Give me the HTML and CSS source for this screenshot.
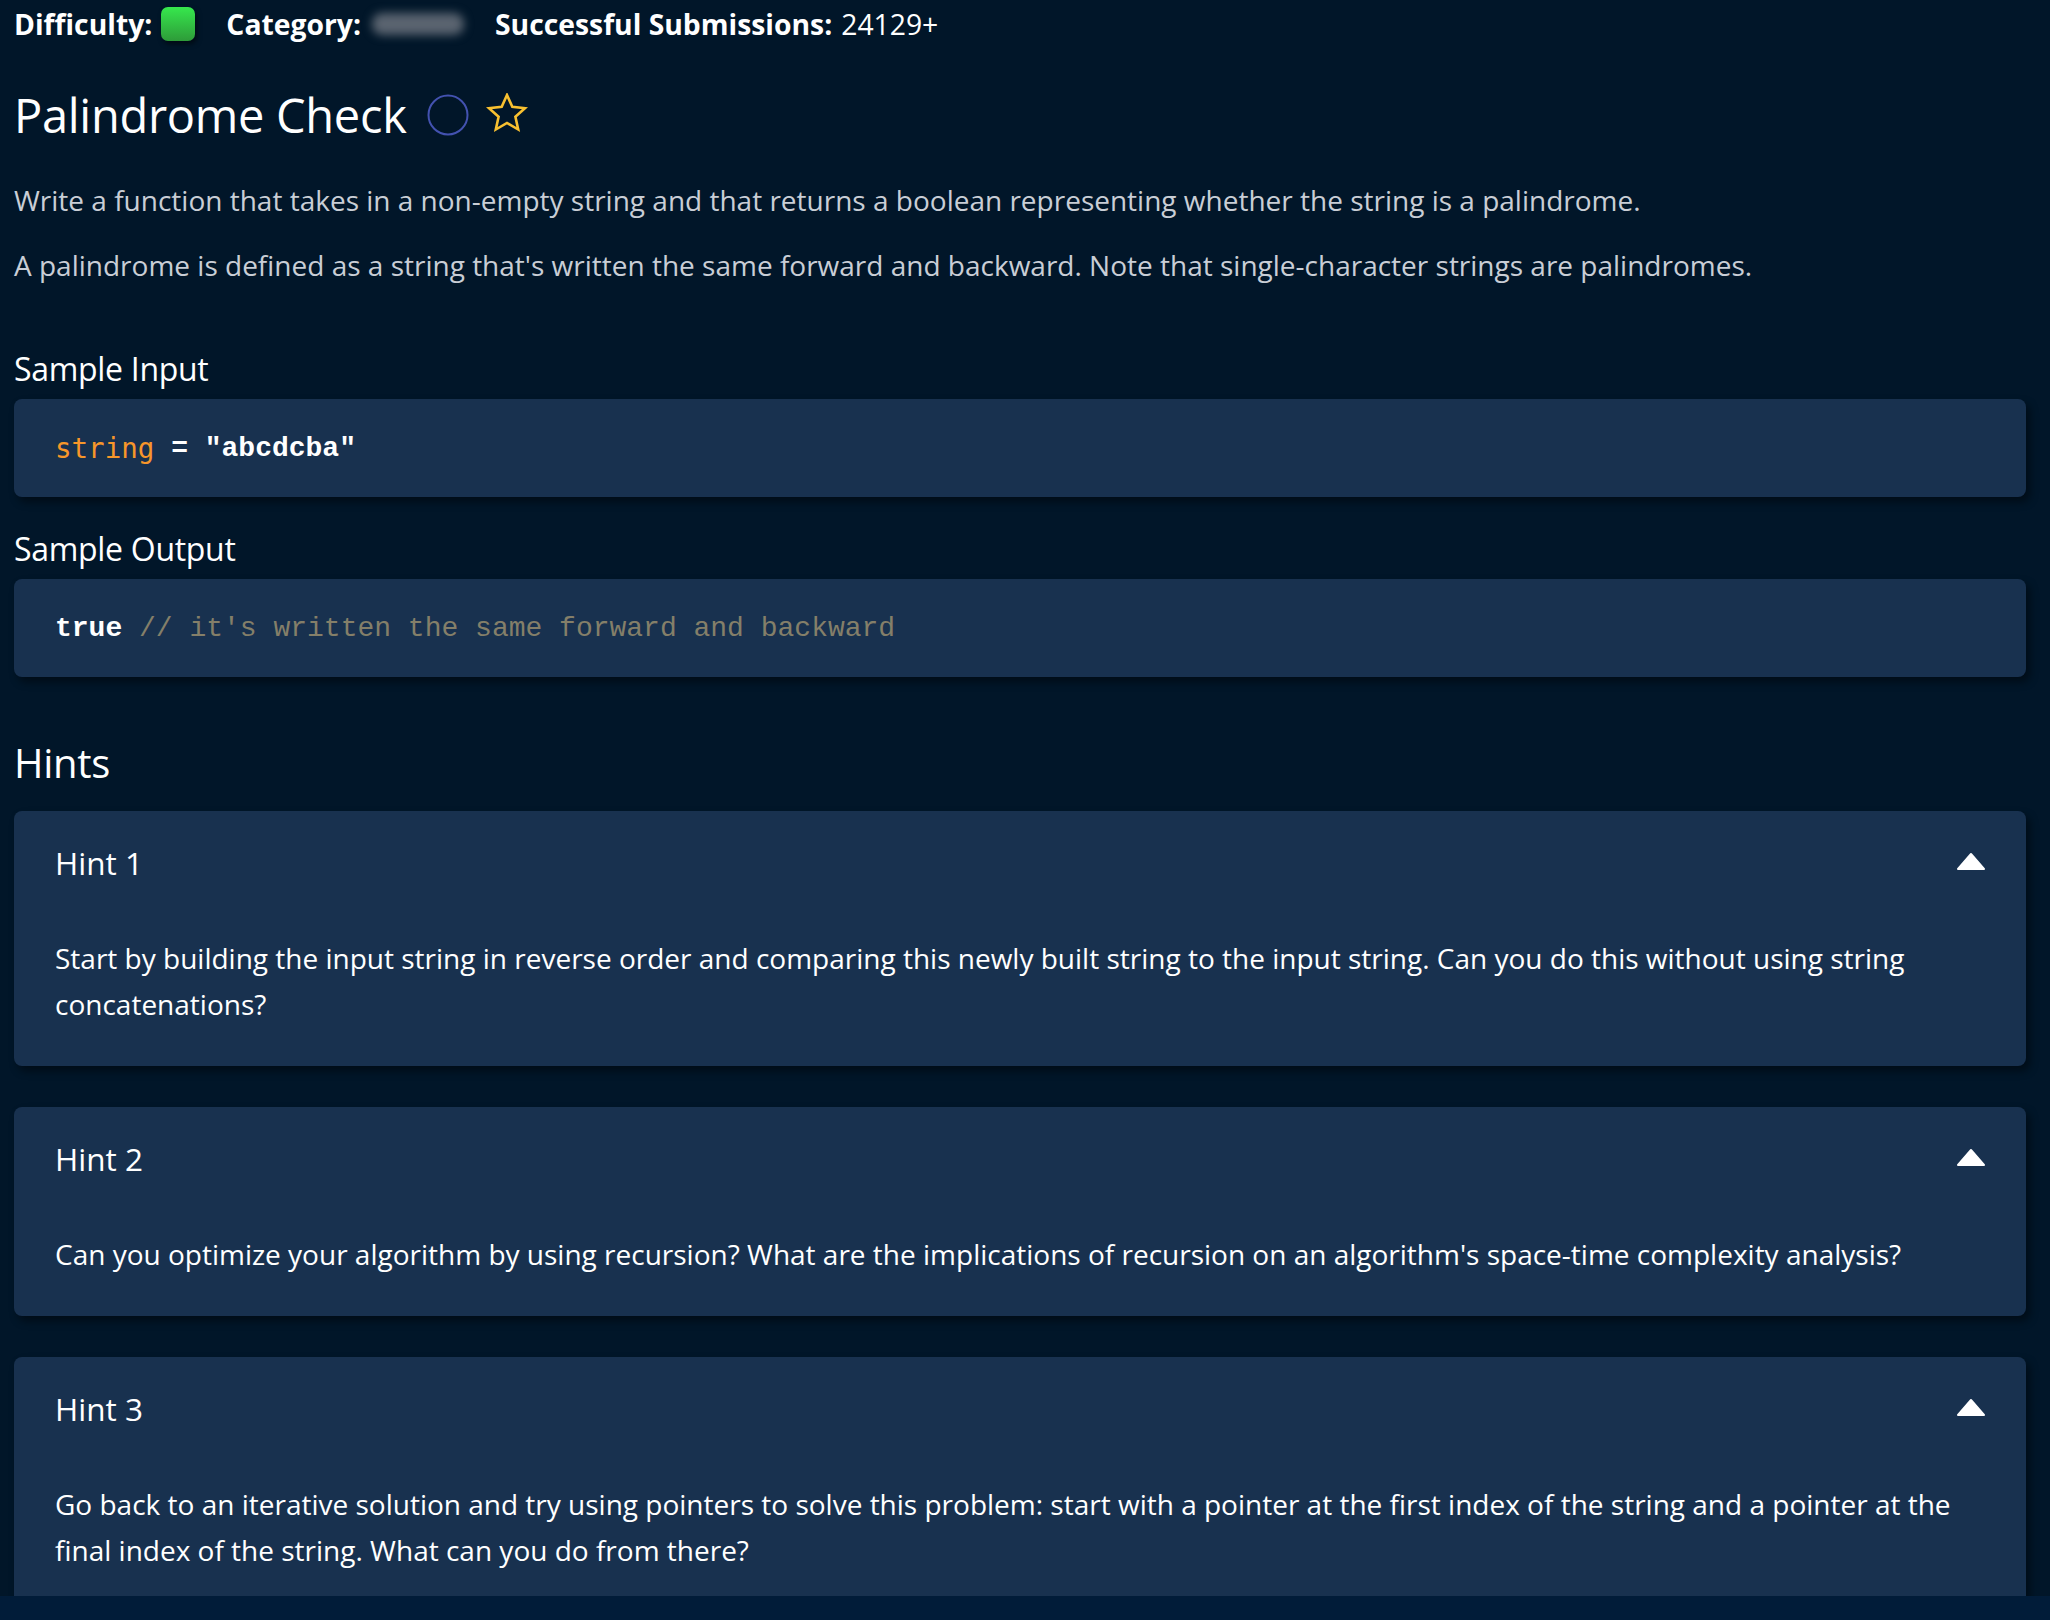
FILE: index.html
```html
<!DOCTYPE html>
<html lang="en">
<head>
<meta charset="utf-8">
<title>Palindrome Check</title>
<link rel="stylesheet" href="styles.css">
</head>
<body>
<main class="page">
  <div class="meta">
    <span class="meta-item"><b>Difficulty:</b><span class="difficulty"></span></span>
    <span class="meta-item"><b>Category:</b><span class="category-blur"></span></span>
    <span class="meta-item"><b>Successful Submissions:</b><span class="count">24129+</span></span>
  </div>

  <h1 class="title">Palindrome Check
    <svg class="icon-circle" width="42" height="42" viewBox="0 0 42 42"><circle cx="21" cy="21" r="19.5" fill="none" stroke="#4352b0" stroke-width="2"/></svg>
    <svg class="icon-star" width="42" height="40" viewBox="0 0 42 40"><polygon points="21,2 26.3,13.9 39,15.2 29.4,23.8 32.2,36.5 21,30 9.8,36.5 12.6,23.8 3,15.2 15.7,13.9" fill="none" stroke="#f8c030" stroke-width="2.6" stroke-linejoin="miter"/></svg>
  </h1>

  <p class="desc">Write a function that takes in a non-empty string and that returns a boolean representing whether the string is a palindrome.</p>
  <p class="desc">A palindrome is defined as a string that's written the same forward and backward. Note that single-character strings are palindromes.</p>

  <h3 class="sub">Sample Input</h3>
  <pre class="code"><span class="kw">string</span><span class="val"> = "abcdcba"</span></pre>

  <h3 class="sub">Sample Output</h3>
  <pre class="code"><span class="val">true</span><span class="cm"> // it's written the same forward and backward</span></pre>

  <h2 class="hints-title">Hints</h2>

  <section class="hint">
    <div class="hint-head"><span>Hint 1</span><svg class="caret" width="30" height="18" viewBox="0 0 30 18"><polygon points="2,17 15,2 28,17" fill="#fff" stroke="#fff" stroke-width="2" stroke-linejoin="round"/></svg></div>
    <p class="hint-body">Start by building the input string in reverse order and comparing this newly built string to the input string. Can you do this without using string concatenations?</p>
  </section>

  <section class="hint">
    <div class="hint-head"><span>Hint 2</span><svg class="caret" width="30" height="18" viewBox="0 0 30 18"><polygon points="2,17 15,2 28,17" fill="#fff" stroke="#fff" stroke-width="2" stroke-linejoin="round"/></svg></div>
    <p class="hint-body">Can you optimize your algorithm by using recursion? What are the implications of recursion on an algorithm's space-time complexity analysis?</p>
  </section>

  <section class="hint">
    <div class="hint-head"><span>Hint 3</span><svg class="caret" width="30" height="18" viewBox="0 0 30 18"><polygon points="2,17 15,2 28,17" fill="#fff" stroke="#fff" stroke-width="2" stroke-linejoin="round"/></svg></div>
    <p class="hint-body">Go back to an iterative solution and try using pointers to solve this problem: start with a pointer at the first index of the string and a pointer at the final index of the string. What can you do from there?</p>
  </section>
</main>
<div class="bottom-bar"></div>
</body>
</html>
```

FILE: styles.css
```css
html, body {
  margin: 0;
  padding: 0;
  background: #011629;
  color: #ffffff;
  font-family: "Open Sans", "Noto Sans", sans-serif;
  overflow: hidden;
  height: 1620px;
}

.page {
  padding: 0 24px 0 14px;
  height: 1620px;
  box-sizing: border-box;
  overflow: hidden;
}

.meta {
  display: flex;
  align-items: center;
  height: 48px;
  gap: 31px;
  font-size: 28.3px;
  color: #ffffff;
}

.meta-item {
  display: flex;
  align-items: center;
  gap: 9px;
}

.meta-item b {
  font-weight: 700;
}

.difficulty {
  display: inline-block;
  width: 34px;
  height: 34px;
  border-radius: 7px;
  background: linear-gradient(#36e84d, #2e9b39);
  box-shadow: 2px 3px 5px rgba(0, 0, 0, 0.55);
}

.category-blur {
  display: inline-block;
  width: 92px;
  height: 22px;
  margin-left: 2px;
  background: #5a6470;
  border-radius: 10px;
  filter: blur(5px);
}

.count {
  font-weight: 400;
}

.title {
  display: flex;
  align-items: center;
  margin: 37px 0 0;
  height: 60px;
  font-size: 47px;
  font-weight: 400;
  letter-spacing: -0.3px;
}

.icon-circle {
  margin-left: 20px;
}

.icon-star {
  margin-left: 17px;
  margin-top: -4px;
}

.desc {
  margin: 29px 0 0;
  font-size: 28px;
  line-height: 36px;
  color: #c9ced6;
}

.desc + .desc {
  margin-top: 29px;
}

.title + .desc {
  margin-top: 37px;
}

.sub {
  margin: 32px 0 10px;
  font-size: 32px;
  line-height: 40px;
  font-weight: 500;
  letter-spacing: -0.3px;
}

.desc + .sub {
  margin-top: 66px;
}

.code {
  margin: 0;
  height: 98px;
  display: flex;
  align-items: center;
  padding: 0 41px;
  background: #18314f;
  border-radius: 8px;
  box-shadow: 4px 5px 9px rgba(0, 0, 0, 0.45);
  font-size: 28px;
  white-space: pre;
}

.kw {
  font-family: "DejaVu Sans Mono", monospace;
  color: #f7962a;
  font-size: 27.5px;
}

.val {
  font-family: "Liberation Mono", monospace;
  font-weight: 700;
  color: #ffffff;
}

.cm {
  font-family: "Liberation Mono", monospace;
  color: #847f69;
}

.hints-title {
  margin: 60px 0 22px;
  font-size: 40px;
  line-height: 52px;
  font-weight: 500;
  letter-spacing: -0.3px;
}

.hint {
  background: #18314f;
  border-radius: 8px;
  box-shadow: 4px 5px 9px rgba(0, 0, 0, 0.45);
  padding: 31px 40px 39px 41px;
  margin-bottom: 41px;
}

.hint-head {
  display: flex;
  justify-content: space-between;
  align-items: center;
  height: 40px;
  font-size: 31.5px;
}

.caret {
  margin-top: -2px;
}

.hint-body {
  margin: 53px 0 0;
  font-size: 28px;
  line-height: 46px;
  color: #ffffff;
}

.bottom-bar {
  position: fixed;
  left: 0;
  right: 0;
  bottom: 0;
  height: 24px;
  background: #011c39;
}
```
